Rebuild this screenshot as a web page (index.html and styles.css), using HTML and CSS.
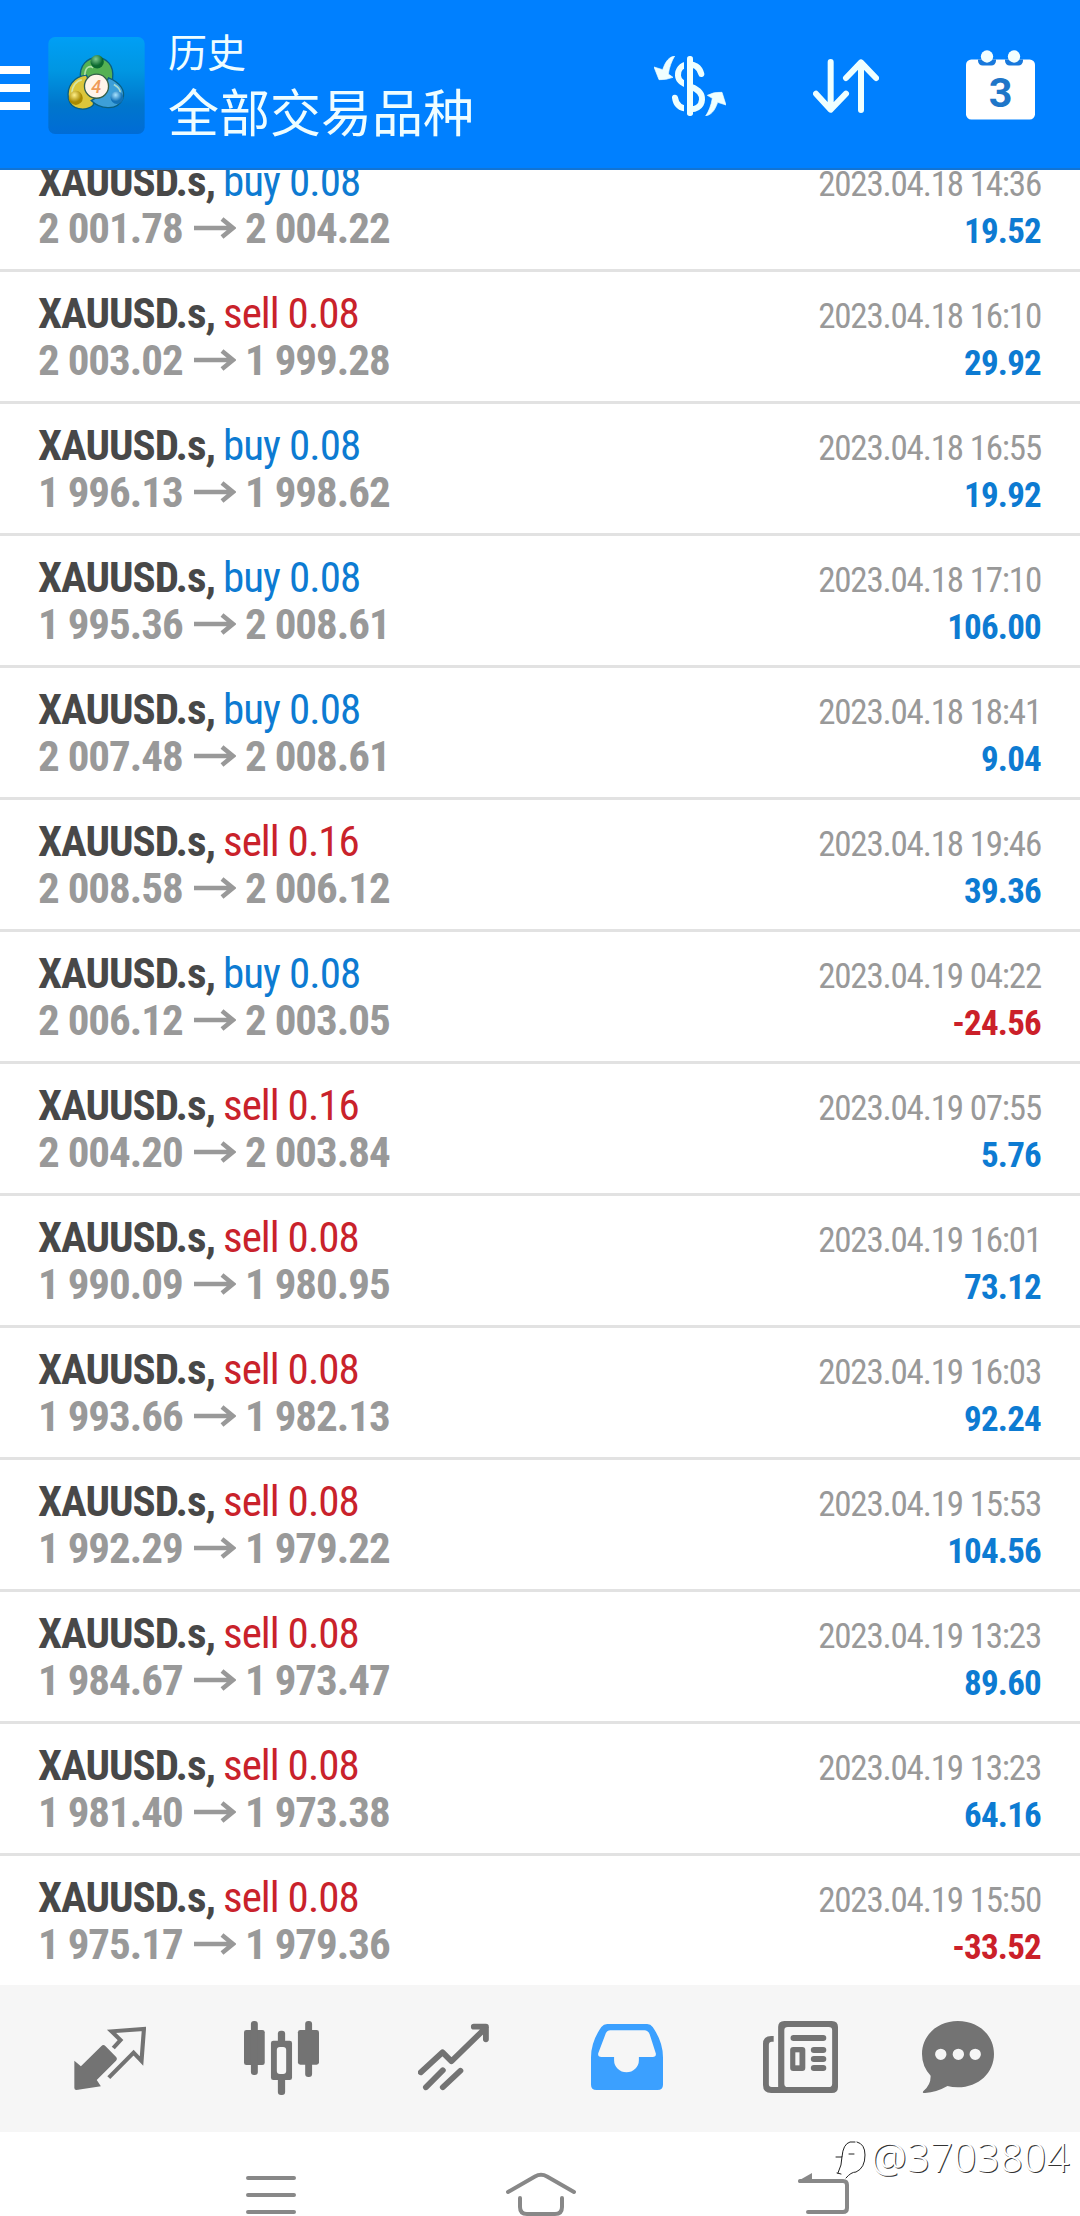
FILE: index.html
```html
<!DOCTYPE html>
<html lang="zh-CN">
<head>
<meta charset="utf-8">
<title>历史</title>
<link rel="stylesheet" href="styles.css">
</head>
<body>
<div class="screen">
  <header class="header">
    <div class="burger"><i></i><i></i><i></i></div>
    <svg class="logo" viewBox="24 22 288 290">
      <defs>
        <linearGradient id="tile" x1="0" y1="0" x2="0" y2="1"><stop offset="0" stop-color="#009ff5"/><stop offset=".35" stop-color="#0096e2"/><stop offset=".7" stop-color="#0076cc"/><stop offset="1" stop-color="#006cd6"/></linearGradient>
        <radialGradient id="green" cx=".4" cy=".3"><stop offset="0" stop-color="#7fca90"/><stop offset="1" stop-color="#0c6a30"/></radialGradient>
        <radialGradient id="gold" cx=".4" cy=".3"><stop offset="0" stop-color="#fff08a"/><stop offset="1" stop-color="#a98900"/></radialGradient>
        <radialGradient id="sky" cx=".4" cy=".3"><stop offset="0" stop-color="#a9e4ff"/><stop offset="1" stop-color="#1272b8"/></radialGradient>
      </defs>
      <rect x="24" y="22" width="288" height="290" rx="20" fill="url(#tile)"/>
      <g stroke="#0a5f80" stroke-width="4">
        <path d="M120 146C116 104 142 84 169 84S222 104 216 148L200 162L138 152Z" fill="#55b153"/>
        <path d="M138 136C98 140 78 172 84 206C92 240 134 246 158 226L164 198Z" fill="#dcc63b"/>
        <path d="M204 144C240 158 256 184 246 208C232 240 182 242 152 212L180 196Z" fill="#3d9fd8"/>
      </g>
      <path d="M133 136C134 112 148 106 158 114M95 190C94 170 108 152 124 150M220 164C234 172 240 182 238 190" fill="none" stroke="#d5f3cf" stroke-width="5" opacity=".7"/>
      <circle cx="170" cy="96" r="20" fill="url(#green)"/>
      <circle cx="106" cy="204" r="21" fill="url(#gold)"/>
      <circle cx="229" cy="203" r="19" fill="url(#sky)"/>
      <circle cx="168" cy="169" r="36" fill="#fff4ea" stroke="#35604a" stroke-width="4"/>
      <text x="167" y="188" class="logo-digit">4</text>
    </svg>
    <div class="titles">
      <div class="title">历史</div>
      <div class="subtitle">全部交易品种</div>
    </div>
    <svg class="act-money" viewBox="27 33 216 180">
      <g fill="none" stroke="#eeffff" stroke-width="18" stroke-linecap="round"><path d="M169 87C164 66 146 56 130 58C108 60 98 75 99 92C100 112 122 118 140 126C160 134 172 146 171 164C170 186 150 195 130 192C110 191 93 182 90 158"/></g>
      <path d="M117 46h18v160h-18z" fill="#0080ff"/>
      <rect x="126" y="33" width="18" height="180" rx="8" fill="#efffff"/>
      <path d="M89 33C72 36 62 48 53 74L27 66L42 104Q62 106 84 97L70 87C73 66 80 48 89 33ZM182 213C199 209 209 198 218 172L243 180L231 142Q208 139 187 151L202 160C198 182 192 198 182 213Z" fill="#efffff" stroke="#efffff" stroke-width="2" stroke-linejoin="round"/>
    </svg>
    <svg class="act-sort" viewBox="639 177 198 162"><path d="M692 186V328M648 281L692 329L738 281M783 330V188M738 234L783 187L828 234" fill="none" stroke="#efffff" stroke-width="18" stroke-linecap="round" stroke-linejoin="round"/></svg>
    <svg class="act-cal" viewBox="1098 149 207 209">
      <rect x="1098" y="177" width="207" height="180" rx="16" fill="#fff"/>
      <path d="M1134 177h54v4a14 14 0 0 1-14 14h-26a14 14 0 0 1-14-14zM1215 177h54v4a14 14 0 0 1-14 14h-26a14 14 0 0 1-14-14z" fill="#1878dc"/>
      <circle cx="1161" cy="168" r="18.500" fill="#f2ffff"/><circle cx="1242" cy="168" r="18.500" fill="#f2ffff"/>
      <text x="1202" y="320" class="cal-digit">3</text>
    </svg>
  </header>

  <main class="list">
    <div class="row"><div class="deal"><b>XAUUSD.s,</b><span class="buy">buy 0.08</span></div><time>2023.04.18 14:36</time><div class="price"><span>2 001.78</span><svg viewBox="0 0 42 22"><path d="M0 11H39M28 2L39 11L28 20"/></svg><span>2 004.22</span></div><div class="profit">19.52</div></div>
    <div class="row"><div class="deal"><b>XAUUSD.s,</b><span class="sell">sell 0.08</span></div><time>2023.04.18 16:10</time><div class="price"><span>2 003.02</span><svg viewBox="0 0 42 22"><path d="M0 11H39M28 2L39 11L28 20"/></svg><span>1 999.28</span></div><div class="profit">29.92</div></div>
    <div class="row"><div class="deal"><b>XAUUSD.s,</b><span class="buy">buy 0.08</span></div><time>2023.04.18 16:55</time><div class="price"><span>1 996.13</span><svg viewBox="0 0 42 22"><path d="M0 11H39M28 2L39 11L28 20"/></svg><span>1 998.62</span></div><div class="profit">19.92</div></div>
    <div class="row"><div class="deal"><b>XAUUSD.s,</b><span class="buy">buy 0.08</span></div><time>2023.04.18 17:10</time><div class="price"><span>1 995.36</span><svg viewBox="0 0 42 22"><path d="M0 11H39M28 2L39 11L28 20"/></svg><span>2 008.61</span></div><div class="profit">106.00</div></div>
    <div class="row"><div class="deal"><b>XAUUSD.s,</b><span class="buy">buy 0.08</span></div><time>2023.04.18 18:41</time><div class="price"><span>2 007.48</span><svg viewBox="0 0 42 22"><path d="M0 11H39M28 2L39 11L28 20"/></svg><span>2 008.61</span></div><div class="profit">9.04</div></div>
    <div class="row"><div class="deal"><b>XAUUSD.s,</b><span class="sell">sell 0.16</span></div><time>2023.04.18 19:46</time><div class="price"><span>2 008.58</span><svg viewBox="0 0 42 22"><path d="M0 11H39M28 2L39 11L28 20"/></svg><span>2 006.12</span></div><div class="profit">39.36</div></div>
    <div class="row"><div class="deal"><b>XAUUSD.s,</b><span class="buy">buy 0.08</span></div><time>2023.04.19 04:22</time><div class="price"><span>2 006.12</span><svg viewBox="0 0 42 22"><path d="M0 11H39M28 2L39 11L28 20"/></svg><span>2 003.05</span></div><div class="profit loss">-24.56</div></div>
    <div class="row"><div class="deal"><b>XAUUSD.s,</b><span class="sell">sell 0.16</span></div><time>2023.04.19 07:55</time><div class="price"><span>2 004.20</span><svg viewBox="0 0 42 22"><path d="M0 11H39M28 2L39 11L28 20"/></svg><span>2 003.84</span></div><div class="profit">5.76</div></div>
    <div class="row"><div class="deal"><b>XAUUSD.s,</b><span class="sell">sell 0.08</span></div><time>2023.04.19 16:01</time><div class="price"><span>1 990.09</span><svg viewBox="0 0 42 22"><path d="M0 11H39M28 2L39 11L28 20"/></svg><span>1 980.95</span></div><div class="profit">73.12</div></div>
    <div class="row"><div class="deal"><b>XAUUSD.s,</b><span class="sell">sell 0.08</span></div><time>2023.04.19 16:03</time><div class="price"><span>1 993.66</span><svg viewBox="0 0 42 22"><path d="M0 11H39M28 2L39 11L28 20"/></svg><span>1 982.13</span></div><div class="profit">92.24</div></div>
    <div class="row"><div class="deal"><b>XAUUSD.s,</b><span class="sell">sell 0.08</span></div><time>2023.04.19 15:53</time><div class="price"><span>1 992.29</span><svg viewBox="0 0 42 22"><path d="M0 11H39M28 2L39 11L28 20"/></svg><span>1 979.22</span></div><div class="profit">104.56</div></div>
    <div class="row"><div class="deal"><b>XAUUSD.s,</b><span class="sell">sell 0.08</span></div><time>2023.04.19 13:23</time><div class="price"><span>1 984.67</span><svg viewBox="0 0 42 22"><path d="M0 11H39M28 2L39 11L28 20"/></svg><span>1 973.47</span></div><div class="profit">89.60</div></div>
    <div class="row"><div class="deal"><b>XAUUSD.s,</b><span class="sell">sell 0.08</span></div><time>2023.04.19 13:23</time><div class="price"><span>1 981.40</span><svg viewBox="0 0 42 22"><path d="M0 11H39M28 2L39 11L28 20"/></svg><span>1 973.38</span></div><div class="profit">64.16</div></div>
    <div class="row"><div class="deal"><b>XAUUSD.s,</b><span class="sell">sell 0.08</span></div><time>2023.04.19 15:50</time><div class="price"><span>1 975.17</span><svg viewBox="0 0 42 22"><path d="M0 11H39M28 2L39 11L28 20"/></svg><span>1 979.36</span></div><div class="profit loss">-33.52</div></div>
  </main>

  <nav class="tabs">
    <svg class="w72" viewBox="215 153 209 222" preserveAspectRatio="none">
      <path d="M216 272L235 289L294 229Q300 222 306 228L338 262Q342 267 337 272L281 330L293 349L222 360Q216 360 216 354Z" fill="#737373"/>
      <path d="M329 234L350 210L324 184L418 177L411 273L388 248L316 323" fill="none" stroke="#737373" stroke-width="12"/>
    </svg>
    <svg class="w75" viewBox="709 153 217 222" preserveAspectRatio="none" fill="#737373">
      <rect x="709" y="180" width="60" height="105" rx="7"/><rect x="729" y="153" width="20" height="162" rx="9"/>
      <rect x="865" y="180" width="61" height="104" rx="7"/><rect x="886" y="153" width="20" height="168" rx="9"/>
      <rect x="787" y="212" width="61" height="118" rx="7"/><rect x="807" y="182" width="21" height="193" rx="9"/>
      <rect x="804" y="231" width="27" height="81" rx="9" fill="#f6f6f6"/>
    </svg>
    <svg class="w71" viewBox="1214 153 206 222" preserveAspectRatio="none"><path d="M1222 307L1285 247L1311 274L1411 173M1376 170H1411V208M1237 352L1286 301M1286 352L1337 302" fill="none" stroke="#737373" stroke-width="17" stroke-linecap="round" stroke-linejoin="round"/></svg>
    <svg class="w72" viewBox="147 153 209 222" preserveAspectRatio="none"><path fill="#3ba0ff" fill-rule="evenodd" d="M194 162H310Q320 162 326 171Q356 215 356 262V344Q356 360 340 360H163Q147 360 147 344V262Q147 215 177 171Q184 162 194 162ZM203 181Q194 181 190 190L168 250Q166 261 177 261H214V271A36 36 0 0 0 286 271V261H326Q337 261 335 250L317 192Q312 181 302 181Z"/></svg>
    <svg class="w75" viewBox="646 153 218 222" preserveAspectRatio="none">
      <path fill="#737373" fill-rule="evenodd" d="M708 153H846Q864 153 864 171V351Q864 369 846 369H670Q646 369 646 345V222Q646 198 670 198H677V215H672Q663 215 663 224V343Q663 351 671 351H690V171Q690 153 708 153ZM718 171Q708 171 708 181V341Q708 351 718 351H837Q847 351 847 341V181Q847 171 837 171Z"/>
      <g fill="#737373"><rect x="726" y="195" width="104" height="18" rx="9"/><rect x="725" y="231" width="44" height="72" rx="9"/><rect x="785" y="231" width="45" height="18" rx="9"/><rect x="785" y="258" width="45" height="18" rx="9"/><rect x="785" y="285" width="45" height="18" rx="9"/></g>
      <rect x="740" y="247" width="12" height="39" fill="#f6f6f6"/>
    </svg>
    <svg class="w72" viewBox="1109 153 209 222" preserveAspectRatio="none"><path fill="#737373" fill-rule="evenodd" d="M1213 153C1274 153 1318 196 1318 252S1274 352 1213 352Q1196 352 1183 348Q1151 367 1118 369Q1107 369 1114 362Q1135 344 1134 317Q1109 289 1109 252C1109 196 1154 153 1213 153ZM1147 253a16.500 17 0 1 0 33 0a16.500 17 0 1 0-33 0ZM1198 253a16.500 17 0 1 0 33 0a16.500 17 0 1 0-33 0ZM1247 253a16.500 17 0 1 0 33 0a16.500 17 0 1 0-33 0Z"/></svg>
  </nav>

  <footer class="system">
    <svg width="50" height="44" viewBox="246 2172 50 44"><path d="M248 2178H294M248 2195H294M248 2212H294"/></svg>
    <svg width="72" height="44" viewBox="505 2172 72 44"><path d="M508 2192L535 2176.500Q541 2173 547 2176.500L574 2192M520 2198V2207Q520 2214 527 2214H555Q562 2214 562 2207V2198"/></svg>
    <svg width="52" height="44" viewBox="798 2172 52 44"><path d="M800 2181H843Q847 2181 847 2185V2208Q847 2212 843 2212H808"/><path class="tip" d="M798 2181L812 2173V2183H799Z"/></svg>
    <div class="mark">
      <svg width="36" height="44" viewBox="0 0 36 44"><path class="mark-shade" d="M1 22h6q1-13 8-15h5M7 22q0 8-4 16M2 38l4 1M14 19h5M22 7q8 2 8 13q0 13-9 17q-5 0-10 6"/></svg><span>@3703804</span>
    </div>
  </footer>
</div>
</body>
</html>
```
FILE: styles.css
```css
* { box-sizing: border-box; }
body { margin: 0; background: #fff; font-family: "Roboto Condensed", Roboto, "Noto Sans CJK SC", sans-serif; }
svg { display: block; flex: none; }
.screen { width: 1080px; height: 2216px; display: flex; flex-direction: column; overflow: hidden; }

.header { height: 170px; flex: none; background: #0080ff; border-bottom: 2px solid #1274d4; display: flex; align-items: flex-start; position: relative; z-index: 1; }
.burger { width: 30px; margin-top: 66px; display: flex; flex-direction: column; gap: 10px; }
.burger i { height: 8px; background: #fff; }
.logo { width: 97px; height: 97px; margin: 37px 0 0 18px; }
.logo-digit { font: italic 500 54px Roboto, sans-serif; fill: #ee9a58; text-anchor: middle; }
.titles { width: 485px; margin: 22px 0 0 23px; color: #effdff; font-family: "Noto Sans CJK SC", sans-serif; font-weight: 400; }
.title { font-size: 39px; line-height: 56px; }
.subtitle { font-size: 51px; line-height: 64px; }
.act-money { width: 72px; height: 60px; margin: 56px 0 0 1px; }
.act-sort { width: 66px; height: 54px; margin: 59px 0 0 87px; }
.act-cal { width: 69px; height: 70px; margin: 50px 0 0 87px; }
.cal-digit { font: bold 124px Roboto, sans-serif; fill: #1f76c8; text-anchor: middle; }

.list { height: 1815px; flex: none; display: flex; flex-direction: column; justify-content: flex-end; overflow: hidden; }
.row { height: 132px; flex: none; padding: 18px 38px 0; border-bottom: 3px solid #e2e2e2; display: grid; grid-template-columns: 1fr auto; grid-template-rows: 47px 47px; align-items: baseline; line-height: 47px; white-space: nowrap; }
.row:last-child { height: 129px; border-bottom: 0; }
.deal { display: flex; font-size: 43px; color: #484848; }
.deal b { width: 185px; letter-spacing: -1px; }
.buy { color: #0d7bd2; letter-spacing: -.95px; }
.sell { color: #c9222b; letter-spacing: -.95px; }
time { font-size: 35px; color: #999; text-align: right; letter-spacing: -1.2px; padding-right: 1px; }
.price { display: flex; align-items: center; font-size: 43px; font-weight: 700; color: #999; letter-spacing: -1px; }
.price span:first-child { width: 156px; }
.price svg { width: 42px; height: 22px; margin-right: 9px; margin-bottom: 1px; fill: none; stroke: #999; stroke-width: 4.5; }
.profit { font-size: 35px; font-weight: 700; color: #0d7bd2; text-align: right; letter-spacing: -.8px; padding-right: 1px; }
.loss { color: #cb2029; }

.tabs { height: 147px; flex: none; background: #f6f6f6; padding: 36px 0 0 74px; display: grid; grid-template-columns: 170px 174px 173px 172px 159px 1fr; }
.tabs svg { height: 74px; }
.w71 { width: 71px; }
.w72 { width: 72px; }
.w75 { width: 75px; }

.system { height: 84px; flex: none; position: relative; display: grid; grid-template-columns: 259px 293px 1fr; padding: 40px 0 0 246px; }
.system path { fill: none; stroke: #888; stroke-width: 4; stroke-linecap: round; }
.system .tip { fill: #888; stroke: none; }
.mark { position: absolute; left: 835px; top: 3px; display: flex; font: 300 40px/44px "Noto Sans", sans-serif; letter-spacing: .4px; color: #fff; text-shadow: 1px 1px 0 #333; }
.system .mark-shade { stroke: #222; stroke-width: 1; }
```
